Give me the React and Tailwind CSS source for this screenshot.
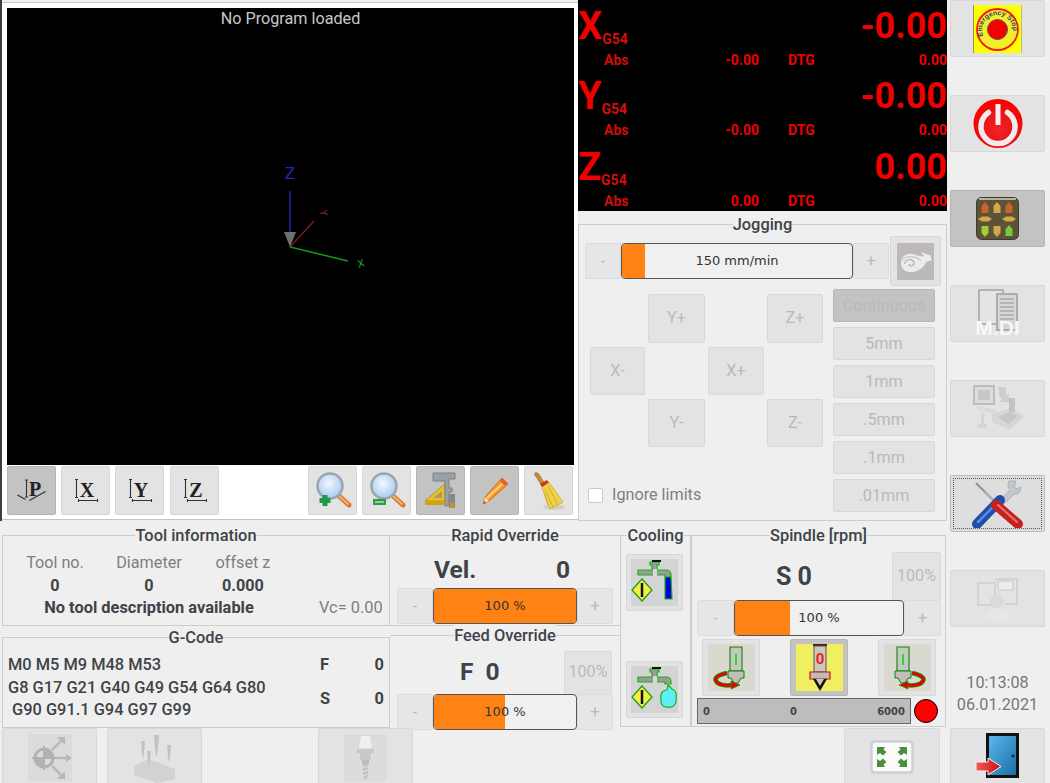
import React from "react";

const Btn = ({ className = "", on = false, children }) => (
  <div className={`flex shrink-0 items-center justify-center rounded-[2px] border ${on ? "border-[#b6b6b6] bg-[#c3c3c3]" : "border-[#d8d8d8] bg-[#e3e3e3]"} ${className}`}>
    {children}
  </div>
);

const Group = ({ title, className = "", children }) => (
  <div className={`border border-[#cdcdc9] ${className}`}>
    <div className="-mt-[11px] mx-auto h-[20px] w-fit bg-[#efefef] px-0 text-center text-[16.4px] font-medium leading-[22px] text-[#3e4347]">{title}</div>
    {children}
  </div>
);

const Slider = ({ label, fill, className = "", leftW = "w-[36px]", barW = "w-[144px]", rightW = "w-[36px]" }) => (
  <div className={`flex h-[36px] shrink-0 ${className}`}>
    <div className={`flex items-center justify-center rounded-l-[2px] border border-[#dcdcdc] bg-[#e6e6e6] text-[14px] text-[#b5b5b5] ${leftW}`}>-</div>
    <div className={`relative overflow-hidden rounded-[4px] border border-[#555] bg-[#f0f0f0] ${barW}`}>
      <div className="h-full rounded-l-[3px] bg-[#ff8214]" style={{ width: fill }} />
      <div className="absolute inset-0 flex items-center justify-center font-['DejaVu_Sans'] text-[13px] text-[#333]">{label}</div>
    </div>
    <div className={`flex items-center justify-center rounded-r-[2px] border border-[#dcdcdc] bg-[#e6e6e6] text-[17px] text-[#bbb] ${rightW}`}>+</div>
  </div>
);

const ViewIcon = ({ l }) => (
  <svg width="38" height="38" viewBox="0 0 38 38">
    <path d="M9.500 7.500V25.500M8 7.500H11M8 25.500H11" stroke="#333" strokeWidth="1.100" fill="none" />
    <path d="M11.500 28.500H30.500M11.500 27V30M30.500 27V30" stroke="#333" strokeWidth="1.100" fill="none" />
    <text x="20" y="24.500" textAnchor="middle" fontFamily="Liberation Serif" fontWeight="700" fontSize="20" fill="#222">{l}</text>
  </svg>
);

const PIcon = () => (
  <svg width="38" height="38" viewBox="0 0 38 38">
    <path d="M13.500 8V25M12 8H15M12 25H15" stroke="#333" strokeWidth="1.100" fill="none" />
    <path d="M16.500 28.500L32.500 19.500M4.500 23L12.500 27.500" stroke="#333" strokeWidth="1.300" fill="none" />
    <text x="22" y="24" textAnchor="middle" fontFamily="Liberation Serif" fontWeight="700" fontSize="20" fill="#222">P</text>
  </svg>
);

const Magnifier = ({ plus }) => (
  <svg width="40" height="40" viewBox="0 0 40 40">
    <defs>
      <radialGradient id={plus ? "lensA" : "lensB"} cx="0.45" cy="0.4" r="0.7">
        <stop offset="0" stopColor="#f2f7ff" />
        <stop offset="1" stopColor="#9cc3ee" />
      </radialGradient>
    </defs>
    <path d="M25 24L36 34" stroke="#d9762a" strokeWidth="5" strokeLinecap="round" />
    <path d="M25 24L35 33" stroke="#f6b36a" strokeWidth="2" strokeLinecap="round" />
    <circle cx="17" cy="15" r="12.500" fill={`url(#${plus ? "lensA" : "lensB"})`} stroke="#9aa5b0" strokeWidth="2.500" />
    {plus ? (
      <path d="M12 24V35M6.500 29.500H17.500" stroke="#1f9a45" strokeWidth="5" />
    ) : (
      <path d="M6 31H19" stroke="#2c9c4e" strokeWidth="6" />
    )}
    {plus ? null : <path d="M8 31H17" stroke="#a8e0b5" strokeWidth="1.500" />}
  </svg>
);

const ToolsetIcon = () => (
  <svg width="40" height="42" viewBox="0 0 40 42">
    <path d="M4 31L24 14V31Z" fill="#e8c02a" stroke="#b8951a" strokeWidth="1" />
    <path d="M12 28L21 21V28Z" fill="#a69c62" />
    <path d="M12 3H34V9H28V18H31V22H28V36H24V11H12Z" fill="#98a0a8" stroke="#7b8188" strokeWidth="1" />
    <path d="M28 24H34V38H28Z" fill="#868a8e" />
    <path d="M29 33H33V38H29Z" fill="#c0981e" />
    <path d="M4 31H24V35H4Z" fill="#d0a315" />
  </svg>
);

const PencilIcon = () => (
  <svg width="30" height="32" viewBox="0 0 30 32">
    <path d="M22 3L28 9L9 26L3 29L5 22Z" fill="#f49a28" stroke="#d9681b" strokeWidth="1" />
    <path d="M21 4.500L26 9.500" stroke="#e55b3a" strokeWidth="3" />
    <path d="M7 23L22 9" stroke="#fbd384" strokeWidth="2" />
    <path d="M5 22L9 26L3 29Z" fill="#f7dcaa" />
    <path d="M3 29L4.500 26L6 28Z" fill="#c52a20" />
  </svg>
);

const BroomIcon = () => (
  <svg width="34" height="40" viewBox="0 0 34 40">
    <ellipse cx="22" cy="36" rx="11" ry="3" fill="#cfcfcf" />
    <path d="M3 2C6 1 7 3 8 5L13 13L10 15L5 7C3 5 2 3 3 2Z" fill="#c88a38" stroke="#946222" strokeWidth="0.600" />
    <path d="M9 14L16 10L31 31L18 38Z" fill="#efd24a" stroke="#cfa923" strokeWidth="0.800" />
    <path d="M13 18L21 36M16 15L26 34M12 22L16 34" stroke="#c9a520" strokeWidth="0.800" />
    <path d="M8 13L15 9L16.500 12L10 16Z" fill="#c7362c" />
  </svg>
);

const EStop = () => (
  <svg width="49" height="48" viewBox="0 0 49 48">
    <rect width="49" height="48" fill="#ffff00" />
    <rect x="0" y="0" width="0.800" height="48" fill="#777" />
    <rect x="48.200" y="0" width="0.800" height="48" fill="#aaa" />
    <circle cx="24.500" cy="24.500" r="20.500" fill="#f3ee2a" stroke="#f01a1a" strokeWidth="1.800" />
    <circle cx="24.500" cy="24.500" r="10" fill="#f50000" stroke="#555" strokeWidth="1" />
    <defs>
      <path id="estopArc" d="M10 31A15.500 15.500 0 1 1 39 31" />
    </defs>
    <text fontFamily="Liberation Sans" fontWeight="700" fontSize="6.900" fill="#3a3a6a">
      <textPath href="#estopArc">Emergency Stop</textPath>
    </text>
  </svg>
);

const PowerIcon = () => (
  <svg width="50" height="49" viewBox="0 0 50 49">
    <defs>
      <radialGradient id="pwr" cx="0.5" cy="0.6" r="0.55">
        <stop offset="0" stopColor="#f02424" />
        <stop offset="0.75" stopColor="#e80f14" />
        <stop offset="1" stopColor="#ff0000" />
      </radialGradient>
    </defs>
    <circle cx="25" cy="24.500" r="24.500" fill="url(#pwr)" />
    <path d="M15.500 13.500A17 17 0 1 0 34.500 13.500" fill="none" stroke="#f4eaea" strokeWidth="5.500" strokeLinecap="round" />
    <rect x="22.500" y="5" width="5" height="21" fill="#f7eeee" />
  </svg>
);

const JogIcon = () => {
  const a = [
    [9, 11, "#c9622c", 0], [21, 11, "#d2a848", 0], [33, 11, "#c9622c", 0],
    [9, 22, "#d2a848", 90], [33, 22, "#d2a848", 90],
    [9, 34, "#9bcf3a", 180], [21, 34, "#d2a848", 180], [33, 34, "#7bc83a", 0],
  ];
  return (
    <svg width="43" height="43" viewBox="0 0 43 43">
      <rect x="0.500" y="0.500" width="42" height="42" rx="5" fill="#5b5237" stroke="#3e3a2c" />
      <path d="M3 2H40" stroke="#d8d5c0" strokeWidth="1.500" />
      {a.map(([x, y, c, r], i) => (
        <path key={i} d={r === 90 ? `M${x - 7} ${y}L${x - 3} ${y - 2.5}H${x + 3}L${x + 7} ${y}L${x + 3} ${y + 2.5}H${x - 3}Z` : `M${x} ${y - 6}L${x + 3.5} ${y - 2}V${y + 5}H${x - 3.5}V${y - 2}Z`} fill={c} transform={r === 180 ? `rotate(180 ${x} ${y})` : undefined} />
      ))}
    </svg>
  );
};

const MdiIcon = () => (
  <div className="relative h-[52px] w-[48px]">
    <svg width="48" height="52" viewBox="0 0 48 52">
      <path d="M5 2H29V36H5Z" fill="#e4e4e4" stroke="#b3b3b3" strokeWidth="2" />
      <path d="M23 6H43V42H23Z" fill="#d6d6d6" stroke="#adadad" strokeWidth="2" />
      <path d="M26 11H40M26 15H40M26 19H40M26 23H40M26 27H40M26 31H40" stroke="#aaa" strokeWidth="1.500" />
    </svg>
    <span className="absolute bottom-[2px] left-0 right-0 text-center font-['Liberation_Sans'] text-[21px] font-bold leading-[21px] text-[#f7f7f7]">M.DI</span>
  </div>
);

const CamIcon = () => (
  <svg width="52" height="50" viewBox="0 0 52 50">
    <path d="M2 2H22V20H2Z" fill="#dcdcdc" stroke="#bcbcbc" strokeWidth="2" />
    <path d="M6 6H18V16H6Z" fill="#c6c6c6" />
    <path d="M4 22L25 26V31L6 26Z" fill="#dadada" />
    <path d="M26 3H34V12L37 9V18H28L31 14H28Z" fill="#cdcdcd" />
    <path d="M20 31L38 24L52 32L38 46L20 38Z" fill="#d6d6d6" />
    <path d="M26 33L38 28L46 32L36 40Z" fill="#c6c6c6" />
    <path d="M37 14H43V28H37Z" fill="#c4c4c4" />
    <path d="M8 32L11 28L14 32H12V40H15V44H5V40H9V32Z" fill="#d6d6d6" />
  </svg>
);

const ToolsIcon = () => (
  <svg width="54" height="50" viewBox="0 0 54 50">
    <path d="M5 4L26 25" stroke="#aab0b6" strokeWidth="2.500" />
    <path d="M5 4L14 13" stroke="#7e848a" strokeWidth="1" />
    <path d="M38 2C36 6 37 9 39 11L27 24L31 27L43 15C47 16 50 13 50 8L46 10L43 8L45 2Z" fill="#c3c7cb" stroke="#93989d" strokeWidth="0.600" />
    <path d="M6 45L29 21" stroke="#1f4da8" strokeWidth="10" strokeLinecap="round" />
    <path d="M7 43L27 23" stroke="#5b8be0" strokeWidth="2.500" strokeLinecap="round" />
    <path d="M25 26L47 45" stroke="#c81f1f" strokeWidth="10" strokeLinecap="round" />
    <path d="M27 26L46 43" stroke="#ef7272" strokeWidth="2" strokeLinecap="round" />
  </svg>
);

const UserIcon = () => (
  <svg width="46" height="50" viewBox="0 0 46 50">
    <path d="M3 9H20V31H3Z" fill="none" stroke="#d2d2d2" strokeWidth="2" />
    <path d="M20 5H42V30H30" fill="none" stroke="#d2d2d2" strokeWidth="2" />
    <path d="M23 7H38V16H23Z" fill="#ececec" stroke="#d2d2d2" strokeWidth="1.500" />
    <circle cx="22" cy="27" r="7" fill="#dadada" />
    <path d="M10 46C10 37 16 35 22 35C28 35 34 37 34 46Z" fill="#e7e7e7" />
  </svg>
);

const ExitIcon = () => (
  <svg width="60" height="47" viewBox="0 0 60 47">
    <defs>
      <linearGradient id="door" x1="0" y1="0" x2="1" y2="1">
        <stop offset="0" stopColor="#58b8ec" />
        <stop offset="1" stopColor="#1b6fa8" />
      </linearGradient>
      <linearGradient id="arrow" x1="0" y1="0" x2="1" y2="0">
        <stop offset="0" stopColor="#f25a5a" />
        <stop offset="1" stopColor="#c90f0f" />
      </linearGradient>
    </defs>
    <path d="M18 0H51V45H18Z" fill="#111" />
    <path d="M21 3H48V42H21Z" fill="url(#door)" />
    <circle cx="45" cy="23" r="1.500" fill="#123" />
    <path d="M8 29H20V25L33 33.500L20 42V38H8Z" fill="url(#arrow)" stroke="#f4f4f4" strokeWidth="1" />
  </svg>
);

const FullIcon = () => (
  <svg width="44" height="34" viewBox="0 0 44 34">
    <rect x="1.500" y="1.500" width="41" height="31" rx="3" fill="#fbfbfb" stroke="#cfcfda" strokeWidth="2.500" />
    <path d="M7 7H15L13.500 9.500L16.500 12L13 15.500L10 13L7 15Z" fill="#4b8f3a" />
    <path d="M37 7H29L30.500 9.500L27.500 12L31 15.500L34 13L37 15Z" fill="#4b8f3a" />
    <path d="M7 27H15L13.500 24.500L16.500 22L13 18.500L10 21L7 19Z" fill="#4b8f3a" />
    <path d="M37 27H29L30.500 24.500L27.500 22L31 18.500L34 21L37 19Z" fill="#4b8f3a" />
  </svg>
);

const RabbitIcon = () => (
  <div className="flex h-[37px] w-[37px] items-center justify-center bg-[#bdb9bb]">
    <svg width="34" height="26" viewBox="0 0 34 26">
      <path d="M2 15C2 7 10 4 17 7C21 8 23 9 25 8L22 4L27 6L31 7L33 12L27 14C25 20 18 25 10 24C5 23 2 20 2 15Z" fill="#ecebeb" />
      <path d="M6 16C6 11 13 10 15 14C16 18 10 19 10 16" fill="none" stroke="#bdb9bb" strokeWidth="1.500" />
      <path d="M3 12C8 7 18 8 22 13" fill="none" stroke="#bdb9bb" strokeWidth="1" />
    </svg>
  </div>
);

const Tap = ({ water }) => (
  <div className="flex h-[47px] w-[47px] items-center justify-center bg-[#d4d4d4]">
    <svg width="47" height="47" viewBox="0 0 47 47">
      <path d="M7 11H21V6H19V3H28V6H26V11H36C39 11 40 14 40 16V18H34V16H7Z" fill="#9b9b9b" stroke="#13b513" strokeWidth="1.200" />
      <path d="M22 10H26V17H22Z" fill="#d8d8d8" />
      <path d="M21 2H30" stroke="#111" strokeWidth="2" />
      <path d="M11 20L21 31L11 42L1 31Z" fill="#f3ee45" stroke="#159c15" strokeWidth="1.200" />
      <path d="M11 24V38" stroke="#111" strokeWidth="2.500" />
      {water ? (
        <path d="M34 18H40L41 40H34Z" fill="#0000e0" stroke="#13b513" strokeWidth="1.200" />
      ) : (
        <path d="M37 19L41 23C45 25 46 28 45 32C46 38 42 42 38 41C33 42 29 39 30 33C29 28 31 24 36 24Z" fill="#62eef8" stroke="#13b513" strokeWidth="1.200" />
      )}
    </svg>
  </div>
);

const Spin = ({ dir }) => (
  <div className="flex h-[47px] w-[47px] items-center justify-center bg-[#d9d9d0]">
    <svg width="47" height="47" viewBox="0 0 47 47">
      <g transform={dir === "ccw" ? undefined : "translate(47 0) scale(-1 1)"}>
        <path d="M22 3H34V27H22Z" fill="#c8c8c2" stroke="#0d800d" strokeWidth="1.100" />
        <path d="M20 27H36V34H33L30 39H26L23 34H20Z" fill="#c0c0b8" stroke="#0d800d" strokeWidth="1" />
        <path d="M19 29C10 31 6 34 8 37C10 41 18 42 24 41" fill="none" stroke="#139a13" strokeWidth="4.500" />
        <path d="M19 29C10 31 6 34 8 37C10 41 18 42 24 41" fill="none" stroke="#e80000" strokeWidth="2.800" />
        <path d="M23 37L32 41L23 45Z" fill="#e80000" stroke="#139a13" strokeWidth="0.800" />
      </g>
      <path d={dir === "ccw" ? "M28 10V21" : "M19 10V21"} stroke="#22dd22" strokeWidth="2" />
    </svg>
  </div>
);

const SpinStop = () => (
  <div className="flex h-[47px] w-[47px] items-center justify-center bg-[#efef60]">
    <svg width="47" height="47" viewBox="0 0 47 47">
      <path d="M17 1H31" stroke="#4a1c10" strokeWidth="2" />
      <path d="M18 2H30V28H18Z" fill="#c9c9c0" stroke="#555" strokeWidth="1" />
      <path d="M14 28H34V35H14Z" fill="#bcbcb2" stroke="#cc1111" strokeWidth="1.200" />
      <path d="M17 35H31L24 47Z" fill="#111" />
      <path d="M20 35H28L24 42Z" fill="#c9c9c0" />
      <text x="24" y="20" textAnchor="middle" fontFamily="Roboto" fontWeight="700" fontSize="15" fill="#f21c1c">0</text>
    </svg>
  </div>
);

const CoordIcon = () => (
  <div className="flex h-[48px] w-[44px] items-center justify-center bg-[#dbdbdb]">
    <svg width="44" height="48" viewBox="0 0 44 48">
      <circle cx="16" cy="24" r="9" fill="none" stroke="#b2b2b2" strokeWidth="3" />
      <path d="M16 12V36M4 24H28" stroke="#b2b2b2" strokeWidth="2" />
      <path d="M16 15A9 9 0 0 1 25 24H16ZM16 33A9 9 0 0 1 7 24H16Z" fill="#b2b2b2" />
      <path d="M24 16L34 6M28 24H40M24 32L34 42" stroke="#b8b8b8" strokeWidth="2.500" />
      <path d="M29 3H37V11ZM38 20L44 24L38 28ZM29 45H37V37Z" fill="#b8b8b8" />
    </svg>
  </div>
);

const ProbeIcon = () => (
  <svg width="48" height="50" viewBox="0 0 48 50">
    <path d="M3 33L18 26L44 36L44 46L26 50L3 42Z" fill="#d2d2d2" />
    <path d="M10 8H14L13 20L12 26L11 20ZM23 2H28L27 16L25.500 24L24 16ZM36 12H40L39 24L38 30L37 24ZM16 18H20L19 28L18 34L17 28Z" fill="#c2c2c2" />
  </svg>
);

const DrillIcon = () => (
  <div className="flex h-[48px] w-[43px] items-center justify-center bg-[#dcdcdc]">
    <svg width="43" height="48" viewBox="0 0 43 48">
      <path d="M17 2H26L28 14H15Z" fill="#f0f0f0" />
      <path d="M13 15H30V19H27V26H16V19H13Z" fill="#c9c9c9" />
      <path d="M18 26H25V30H18Z" fill="#bcbcbc" />
      <path d="M19 30H24L24 42L21.500 47L19 42Z" fill="#c3c3c3" />
      <path d="M19 34L24 32M19 38L24 36M19 42L24 40" stroke="#e4e4e4" />
    </svg>
  </div>
);

const DroRow = ({ axis, g, big, abs }) => (
  <div className="h-[70.3px] text-[#f00000]">
    <div className="flex h-[52px] items-start">
      <span className="mt-[5px] text-[38px] font-bold leading-[42px]">{axis}</span>
      <span className="mt-[31px] text-[14px] font-bold leading-[16px] text-[#d80c0c]">{g}</span>
      <span className="mt-[5px] ml-auto text-[36px] font-bold leading-[42px]">{big}</span>
    </div>
    <div className="flex h-[16px] items-center text-[14px] font-bold leading-[16px]">
      <span className="ml-[26px] w-[60px] text-[#d00c0c]">Abs</span>
      <span className="w-[95px] text-right">{abs}</span>
      <span className="ml-[29px] w-[50px]">DTG</span>
      <span className="ml-auto">0.00</span>
    </div>
  </div>
);

const Axes = () => (
  <svg className="absolute left-0 top-0" width="567" height="457" viewBox="7 8 567 457">
    <path d="M290 191V247" stroke="#2222aa" strokeWidth="1.500" />
    <path d="M284 232H296L290 247Z" fill="#6f6f6f" />
    <path d="M290 247L314 221" stroke="#8e1c1c" strokeWidth="1.200" />
    <path d="M290 247L348 261" stroke="#0f9a1f" strokeWidth="1.500" />
    <text x="290" y="179" textAnchor="middle" fontFamily="DejaVu Sans" fontSize="15" fill="#2424c0">Z</text>
    <text x="323" y="216" textAnchor="middle" fontFamily="DejaVu Sans" fontSize="10" fill="#a02020" transform="rotate(80 323 213)">Y</text>
    <text x="361" y="267" textAnchor="middle" fontFamily="DejaVu Sans" fontSize="10" fill="#18b428" transform="rotate(-15 361 264)">X</text>
  </svg>
);

const Side = ({ on, mb = "mb-[38px]", children }) => (
  <Btn on={on} className={`h-[57px] w-[95px] ${mb}`}>{children}</Btn>
);

export default function App() {
  return (
    <div className="flex h-[783px] w-[1050px] overflow-hidden bg-[#efefef] font-['Roboto','Liberation_Sans',sans-serif] text-[#3e4347]">
      <div className="flex w-[950px] shrink-0 flex-col">
        <div className="flex h-[521px] shrink-0">
          <div className="h-[521px] w-[2px] shrink-0 bg-[#3a3f44]" />
          <div className="w-[576px] shrink-0 pt-[2px]">
            <div className="h-[518px] border-y border-t-[#c9c9c9] border-b-[#c4c4c0] bg-white pl-[5px] pt-[5px]">
              <div className="relative h-[457px] w-[567px] bg-black pt-[1px] text-center text-[16.2px] leading-[19px] text-[#c8c8c8]">
                No Program loaded
                <Axes />
              </div>
              <div className="mt-[1px] flex h-[49px] w-[566px] gap-[5px]">
                <Btn on className="h-[49px] w-[49px]"><PIcon /></Btn>
                <Btn className="h-[49px] w-[49px]"><ViewIcon l="X" /></Btn>
                <Btn className="h-[49px] w-[49px]"><ViewIcon l="Y" /></Btn>
                <Btn className="ml-[1px] h-[49px] w-[49px]"><ViewIcon l="Z" /></Btn>
                <Btn className="ml-auto h-[49px] w-[49px]"><Magnifier plus /></Btn>
                <Btn className="h-[49px] w-[49px]"><Magnifier /></Btn>
                <Btn on className="h-[49px] w-[49px]"><ToolsetIcon /></Btn>
                <Btn on className="h-[49px] w-[49px]"><PencilIcon /></Btn>
                <Btn className="h-[49px] w-[49px]"><BroomIcon /></Btn>
              </div>
            </div>
          </div>
          <div className="w-[369px] shrink-0">
            <div className="h-[211px] bg-black">
              <DroRow axis="X" g="G54" big="-0.00" abs="-0.00" />
              <DroRow axis="Y" g="G54" big="-0.00" abs="-0.00" />
              <DroRow axis="Z" g="G54" big="0.00" abs="0.00" />
            </div>
            <Group title="Jogging" className="mt-[13px] h-[297px]">
              <div className="ml-[6px] mt-[2px] flex h-[50px] items-center">
                <Slider label="150 mm/min" fill="10%" leftW="w-[36px]" barW="w-[232px]" rightW="w-[36px]" />
                <Btn className="ml-[1px] h-[50px] w-[51px]"><RabbitIcon /></Btn>
              </div>
              <div className="mt-[2px] flex">
                <div className="ml-[11px] mt-[6px] flex h-[217px] w-[233px] flex-col">
                  <div className="grid grid-cols-[55px_57px_56px_56px] grid-rows-[49px_48px_48px] gap-x-[3px] gap-y-[4px] text-[16.2px] text-[#b9b9b9]">
                    <Btn className="col-start-2 row-start-1">Y+</Btn>
                    <Btn className="col-start-4 row-start-1">Z+</Btn>
                    <Btn className="col-start-1 row-start-2">X-</Btn>
                    <Btn className="col-start-3 row-start-2">X+</Btn>
                    <Btn className="col-start-2 row-start-3">Y-</Btn>
                    <Btn className="col-start-4 row-start-3">Z-</Btn>
                  </div>
                  <div className="mt-auto -ml-[2px] flex items-center gap-[9px] pb-[7px] text-[16.2px] leading-[18px] text-[#7b7f83]">
                    <div className="h-[15px] w-[15px] rounded-[2px] border border-[#c9c9c9] bg-white" />
                    Ignore limits
                  </div>
                </div>
                <div className="ml-[10px] mt-[1px] flex w-[102px] flex-col gap-[5px] text-[16.2px] text-[#b9b9b9]">
                  <Btn on className="h-[33px] pt-[2px]">Continuous</Btn>
                  <Btn className="h-[33px] pt-[2px]">5mm</Btn>
                  <Btn className="h-[33px] pt-[1px]">1mm</Btn>
                  <Btn className="h-[33px] pt-[1px]">.5mm</Btn>
                  <Btn className="h-[33px] pt-[1px]">.1mm</Btn>
                  <Btn className="h-[33px] pt-[1px]">.01mm</Btn>
                </div>
              </div>
            </Group>
          </div>
        </div>

        <div className="flex h-[207px] shrink-0 pl-[2px]">
          <div className="w-[388px] shrink-0 pt-[14px]">
            <Group title="Tool information" className="h-[91px]">
              <div className="ml-[5px] mt-[6px] grid w-[282px] grid-cols-3 text-center text-[16.2px] leading-[23px]">
                <span className="text-[#7b7f83]">Tool no.</span>
                <span className="text-[#7b7f83]">Diameter</span>
                <span className="text-[#7b7f83]">offset z</span>
                <span className="font-bold">0</span>
                <span className="font-bold">0</span>
                <span className="font-bold">0.000</span>
              </div>
              <div className="flex text-[16.4px] leading-[22px]">
                <span className="ml-[5px] w-[282px] text-center font-bold">No tool description available</span>
                <span className="ml-[29px] text-[#7b7f83]">Vc= 0.00</span>
              </div>
            </Group>
            <Group title="G-Code" className="mt-[11px] h-[91px]">
              <div className="ml-[5px] flex text-[16.4px] font-medium leading-[22.5px]">
                <div className="mt-[7px] w-[300px] whitespace-nowrap">
                  <div>M0 M5 M9 M48 M53</div>
                  <div>G8 G17 G21 G40 G49 G54 G64 G80</div>
                  <div>&nbsp;G90 G91.1 G94 G97 G99</div>
                </div>
                <div className="mt-[7px] ml-[12px] w-[64px] font-bold">
                  <div className="flex justify-between"><span>F</span><span>0</span></div>
                  <div className="mt-[11px] flex justify-between"><span>S</span><span>0</span></div>
                </div>
              </div>
            </Group>
          </div>

          <div className="w-[230px] shrink-0 pt-[14px]">
            <Group title="Rapid Override" className="h-[91px] border-x-0">
              <div className="flex h-[43px] items-center pl-[44px] pr-[50px] pt-[7px] text-[24.5px] font-bold text-[#3e4347]">
                <span>Vel.</span>
                <span className="ml-auto">0</span>
              </div>
              <Slider label="100 %" fill="100%" className="ml-[7px]" />
            </Group>
            <Group title="Feed Override" className="mt-[9px] h-[92px] border-x-0 border-b-0 border-t-[#cdcdc9]">
              <div className="flex h-[49px] items-center pl-[70px] pr-[8px] pt-[6px] text-[24.5px] font-bold">
                <span className="tracking-[3px]">F&nbsp;0</span>
                <Btn className="ml-auto h-[44px] w-[48px] text-[16.2px] font-normal tracking-normal text-[#bbb]">100%</Btn>
              </div>
              <Slider label="100 %" fill="50%" className="ml-[7px]" />
            </Group>
          </div>

          <Group title="Cooling" className="mt-[14px] h-[192px] w-[71px] shrink-0">
            <div className="ml-[5px] mt-[9px] flex flex-col gap-[50px]">
              <Btn className="h-[57px] w-[57px]"><Tap water /></Btn>
              <Btn className="h-[57px] w-[57px]"><Tap /></Btn>
            </div>
          </Group>

          <Group title="Spindle [rpm]" className="mt-[14px] h-[192px] w-[255px] shrink-0">
            <div className="mt-[6px] flex h-[49px] items-center pl-[84px] pr-[4px] pt-[1px]">
              <span className="pt-[1px] text-[25px] font-bold">S 0</span>
              <Btn className="ml-auto h-[49px] w-[49px] text-[16.2px] text-[#bbb]">100%</Btn>
            </div>
            <Slider label="100 %" fill="33%" className="ml-[5px]" leftW="w-[37px]" barW="w-[170px]" rightW="w-[37px]" />
            <div className="ml-[10px] mt-[3px] flex w-[234px] justify-between">
              <Btn className="h-[57px] w-[58px]"><Spin dir="ccw" /></Btn>
              <Btn on className="h-[57px] w-[58px]"><SpinStop /></Btn>
              <Btn className="h-[57px] w-[58px]"><Spin dir="cw" /></Btn>
            </div>
            <div className="ml-[5px] mt-[2px] flex items-center">
              <div className="flex h-[26px] w-[214px] items-center justify-between border border-[#666] bg-[#bdbdbd] px-[5px] font-['DejaVu_Sans'] text-[10px] font-bold text-[#444]">
                <span>0</span><span>0</span><span>6000</span>
              </div>
              <div className="ml-[3px] h-[24px] w-[24px] rounded-full border border-black bg-[#ff0000]" />
            </div>
          </Group>
        </div>

        <div className="flex h-[55px] shrink-0 pl-[2px]">
          <Btn className="h-[60px] w-[95px]"><CoordIcon /></Btn>
          <Btn className="ml-[10px] h-[60px] w-[95px]"><ProbeIcon /></Btn>
          <Btn className="ml-[116px] h-[60px] w-[95px]"><DrillIcon /></Btn>
          <Btn className="ml-auto mr-[10px] h-[60px] w-[96px] items-start pt-[11px]"><FullIcon /></Btn>
        </div>
      </div>

      <div className="flex w-[95px] shrink-0 flex-col">
        <Side><EStop /></Side>
        <Side><PowerIcon /></Side>
        <Side on><JogIcon /></Side>
        <Side><MdiIcon /></Side>
        <Side><CamIcon /></Side>
        <Btn className="mb-[38px] h-[57px] w-[95px] !border-[#bdbdbd] !bg-[#dedede]">
          <div className="flex h-[51px] w-[89px] items-center justify-center overflow-hidden border border-dotted border-[#555]"><ToolsIcon /></div>
        </Btn>
        <Side mb="mb-0"><UserIcon /></Side>
        <div className="mt-[45px] text-center text-[16.2px] leading-[22px] text-[#73787c]">
          <div>10:13:08</div>
          <div>06.01.2021</div>
        </div>
        <Btn className="mt-[12px] h-[60px] w-[95px] items-start pt-[4px]"><ExitIcon /></Btn>
      </div>
    </div>
  );
}
